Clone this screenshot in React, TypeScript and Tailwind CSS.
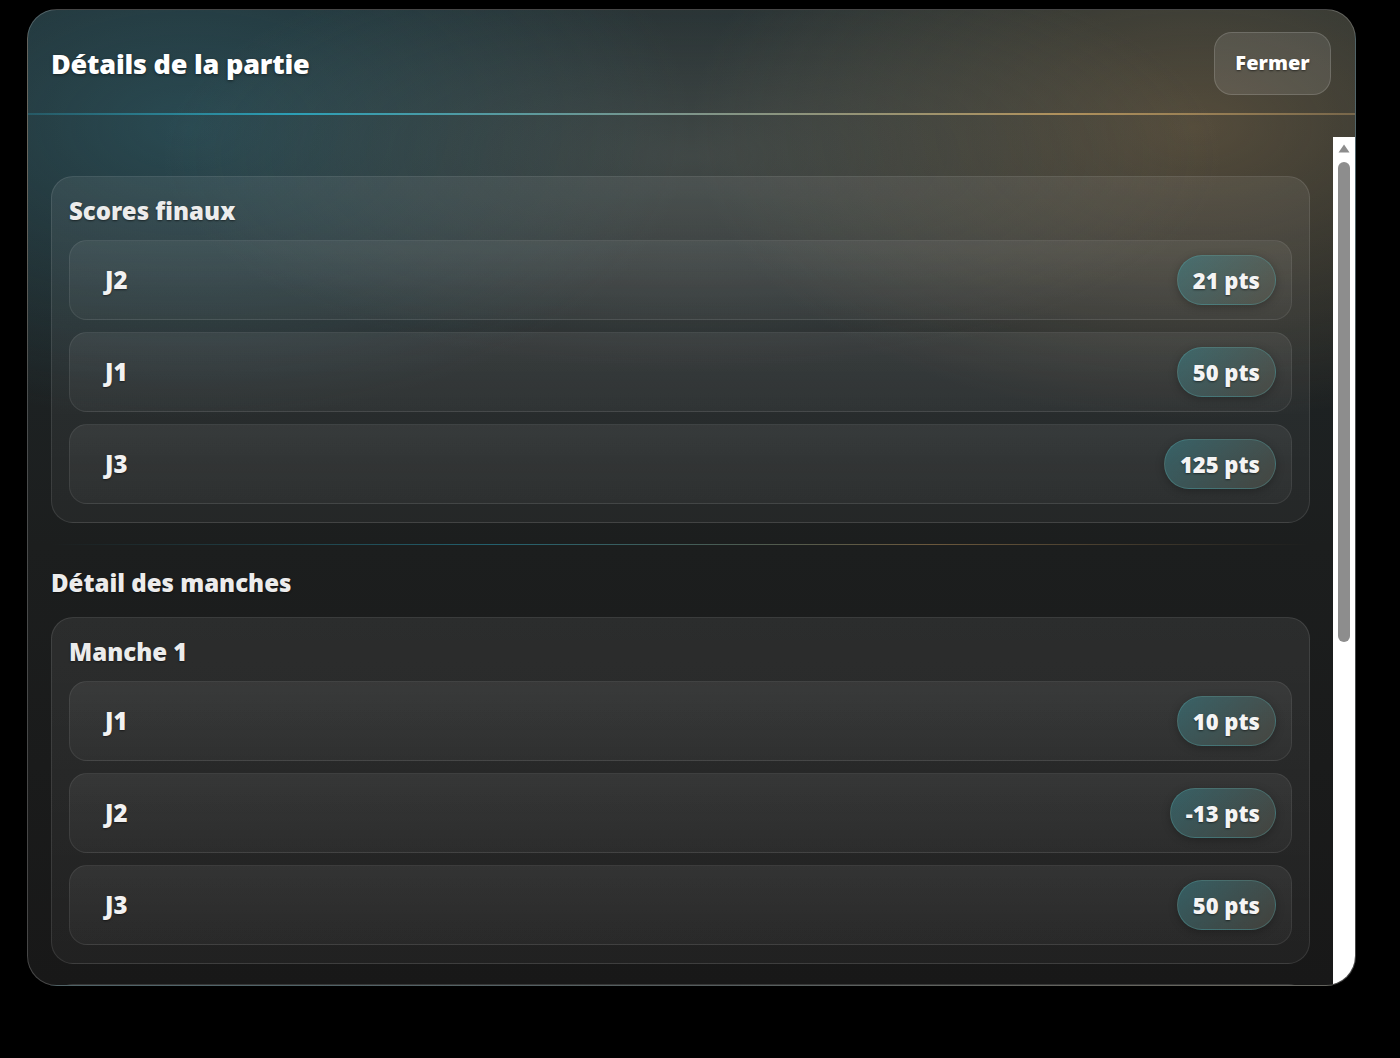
import React from 'react';

type Score = { name: string; pts: number };

const finals: Score[] = [
  { name: 'J2', pts: 21 },
  { name: 'J1', pts: 50 },
  { name: 'J3', pts: 125 },
];

const rounds: { title: string; scores: Score[] }[] = [
  { title: 'Manche 1', scores: [{ name: 'J1', pts: 10 }, { name: 'J2', pts: -13 }, { name: 'J3', pts: 50 }] },
  { title: 'Manche 2', scores: [{ name: 'J1', pts: 20 }, { name: 'J2', pts: 14 }, { name: 'J3', pts: 40 }] },
  { title: 'Manche 3', scores: [{ name: 'J1', pts: 20 }, { name: 'J2', pts: 20 }, { name: 'J3', pts: 35 }] },
];

function ScoreRow({ score }: { score: Score }) {
  return (
    <div className="h-[80px] shrink-0 rounded-[18px] border border-white/[0.08] bg-[linear-gradient(180deg,rgba(255,255,255,0.07),rgba(255,255,255,0.035))] flex items-center justify-between pl-[35px] pr-[15px]">
      <span className="text-[24px] font-black text-[#f2f2f2] [text-shadow:0_1px_2px_rgba(0,0,0,0.5)]">{score.name}</span>
      <span className="h-[50px] px-[15px] rounded-full flex items-center border border-[rgba(90,170,170,0.35)] bg-[linear-gradient(135deg,rgba(60,140,150,0.5),rgba(110,105,90,0.35))] shadow-[0_2px_8px_rgba(0,0,0,0.25)] text-[22px] font-black text-[#f4f4f4] [text-shadow:0_1px_2px_rgba(0,0,0,0.5)]">
        {score.pts} pts
      </span>
    </div>
  );
}

function ScoreCard({ title, scores }: { title: string; scores: Score[] }) {
  return (
    <div className="shrink-0 rounded-[22px] border border-white/10 bg-[linear-gradient(180deg,rgba(255,255,255,0.075),rgba(255,255,255,0.045))] px-[17px] pb-[18px] pt-[17px]">
      <h3 className="text-[24px] leading-[34px] font-black text-[#ececec] mb-[12px] [text-shadow:0_1px_2px_rgba(0,0,0,0.5)]">{title}</h3>
      <div className="flex flex-col gap-3">
        {scores.map((s) => (
          <ScoreRow key={s.name} score={s} />
        ))}
      </div>
    </div>
  );
}

function Scrollbar() {
  return (
    <div className="w-[22px] shrink-0 bg-white flex flex-col items-center">
      <div className="h-[22px] w-full flex items-center justify-center">
        <svg width="12" height="9" viewBox="0 0 12 9">
          <path d="M6 0.5 L11.5 8.5 L0.5 8.5 Z" fill="#8d8d8d" />
        </svg>
      </div>
      <div className="mt-[3px] w-[12px] h-[480px] rounded-full bg-[#8d8d8d]" />
    </div>
  );
}

export default function App() {
  return (
    <div className="min-h-screen bg-black pl-[27px] pt-[9px] font-['Noto_Sans',sans-serif]">
      <div className="w-[1329px] h-[977px] rounded-[30px] border border-white/20 overflow-hidden flex flex-col bg-[radial-gradient(ellipse_40%_22%_at_50%_15%,rgba(135,140,130,0.33),transparent),radial-gradient(ellipse_38%_30%_at_12%_12%,rgba(55,115,130,0.45),transparent),radial-gradient(ellipse_38%_30%_at_88%_12%,rgba(150,120,80,0.45),transparent),linear-gradient(180deg,#1f2a2d_0%,#1c1e1e_55%,#181818_100%)]">
        {/* Header */}
        <div className="h-[103px] shrink-0 flex items-center justify-between pl-[23px] pr-6">
          <h2 className="mt-[6px] text-[27px] tracking-[-0.2px] font-black text-white [text-shadow:0_1px_3px_rgba(0,0,0,0.5)]">Détails de la partie</h2>
          <button className="h-[63px] w-[117px] mt-[3px] rounded-[18px] border border-white/15 bg-white/10 text-[20px] font-black text-white [text-shadow:0_1px_2px_rgba(0,0,0,0.5)]">
            Fermer
          </button>
        </div>
        <div className="h-[2px] shrink-0 bg-[linear-gradient(90deg,rgba(40,150,175,0.3)_0%,#2c9fb6_20%,#7f958a_50%,#b0915c_78%,rgba(170,140,95,0.5)_100%)]" />

        {/* Body */}
        <div className="mt-[22px] flex-1 min-h-0 flex">
          <div className="flex-1 overflow-hidden pl-[23px] pr-[23px] pt-[39px] pb-6 flex flex-col">
            <ScoreCard title="Scores finaux" scores={finals} />

            <div className="shrink-0 mt-[21px] h-px bg-[linear-gradient(90deg,transparent_0%,rgba(40,150,175,0.55)_35%,rgba(185,145,90,0.5)_70%,transparent_100%)]" />

            <h3 className="shrink-0 mt-[21px] mb-[17px] text-[24px] leading-[34px] font-black text-[#ececec] [text-shadow:0_1px_2px_rgba(0,0,0,0.5)]">Détail des manches</h3>

            <div className="flex flex-col gap-5">
              {rounds.map((r) => (
                <ScoreCard key={r.title} title={r.title} scores={r.scores} />
              ))}
            </div>
          </div>
          <Scrollbar />
        </div>
      </div>
    </div>
  );
}
